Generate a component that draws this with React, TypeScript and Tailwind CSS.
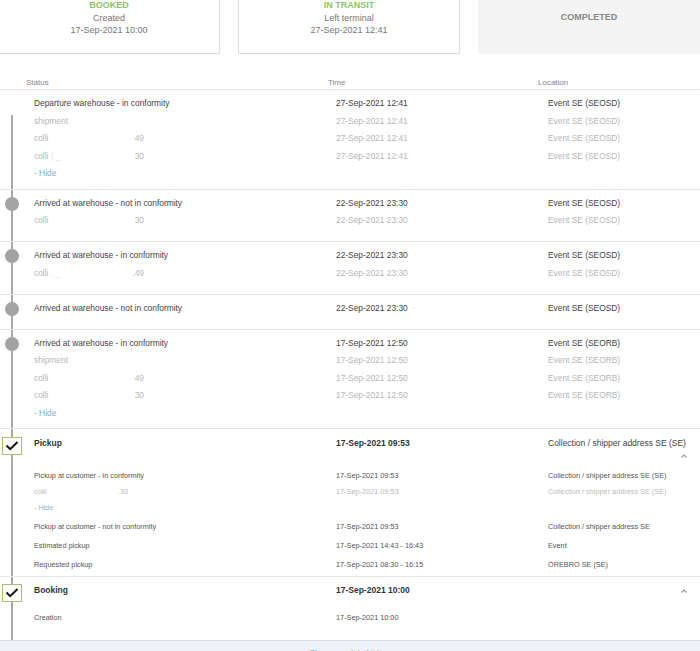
import React from 'react';

type Sub = { label: React.ReactNode; time: string; loc: string };

interface EventRow {
  title: string;
  time: string;
  loc: string;
  subs: Sub[];
  hide?: boolean;
  dot?: boolean;
}

const Colli = ({ num, junk, w = 'w-[110px]' }: { num: string; junk?: string; w?: string }) => (
  <span className={`flex ${w} justify-between`}>
    <span>
      colli<span className="text-[#e4e4e4]">{junk}</span>
    </span>
    <span>{num}</span>
  </span>
);

const rows: EventRow[] = [
  {
    title: 'Departure warehouse - in conformity',
    time: '27-Sep-2021 12:41',
    loc: 'Event SE (SEOSD)',
    hide: true,
    subs: [
      { label: 'shipment', time: '27-Sep-2021 12:41', loc: 'Event SE (SEOSD)' },
      { label: <Colli num="49" />, time: '27-Sep-2021 12:41', loc: 'Event SE (SEOSD)' },
      { label: <Colli num="30" junk=" (   _" />, time: '27-Sep-2021 12:41', loc: 'Event SE (SEOSD)' },
    ],
  },
  {
    title: 'Arrived at warehouse - not in conformity',
    time: '22-Sep-2021 23:30',
    loc: 'Event SE (SEOSD)',
    dot: true,
    subs: [{ label: <Colli num="30" />, time: '22-Sep-2021 23:30', loc: 'Event SE (SEOSD)' }],
  },
  {
    title: 'Arrived at warehouse - in conformity',
    time: '22-Sep-2021 23:30',
    loc: 'Event SE (SEOSD)',
    dot: true,
    subs: [{ label: <Colli num=".49" junk="      .._" />, time: '22-Sep-2021 23:30', loc: 'Event SE (SEOSD)' }],
  },
  {
    title: 'Arrived at warehouse - not in conformity',
    time: '22-Sep-2021 23:30',
    loc: 'Event SE (SEOSD)',
    dot: true,
    subs: [],
  },
  {
    title: 'Arrived at warehouse - in conformity',
    time: '17-Sep-2021 12:50',
    loc: 'Event SE (SEORB)',
    dot: true,
    hide: true,
    subs: [
      { label: 'shipment', time: '17-Sep-2021 12:50', loc: 'Event SE (SEORB)' },
      { label: <Colli num="49" junk=" ." />, time: '17-Sep-2021 12:50', loc: 'Event SE (SEORB)' },
      { label: <Colli num="30" />, time: '17-Sep-2021 12:50', loc: 'Event SE (SEORB)' },
    ],
  },
];

const Caret = () => (
  <svg width="6" height="4" viewBox="0 0 6 4" className="block">
    <path d="M0.5 3.5 L3 1 L5.5 3.5" fill="none" stroke="#9a9a9a" strokeWidth="1.2" />
  </svg>
);

const CheckBox = ({ top }: { top: string }) => (
  <div className={`absolute left-[2px] ${top} flex h-[18px] w-[20px] items-center justify-center border-[1.5px] border-[#abbd6f] bg-white`}>
    <svg width="14" height="12" viewBox="0 0 14 12">
      <path d="M1.5 5.5 L5.2 9.2 L12.5 2" fill="none" stroke="#111" strokeWidth="2" />
    </svg>
  </div>
);

const StatusCard = ({ title, line1, line2 }: { title: string; line1: string; line2: string }) => (
  <div className="h-[54px] rounded-b-[3px] border-x border-b border-[#dcdcdc] bg-white text-center text-[9px] leading-[12.5px] shadow-[0_1px_2px_rgba(0,0,0,0.06)]">
    <div className="-mt-px">
      <div className="font-bold text-[#8cc46b]">{title}</div>
      <div className="text-[#777]">{line1}</div>
      <div className="text-[#777]">{line2}</div>
    </div>
  </div>
);

const Row = ({ row }: { row: EventRow }) => (
  <div className={`relative border-b border-[#e6e6e6] pt-[5px] ${row.hide ? 'pb-[6px]' : 'pb-[11.5px]'}`}>
    {row.dot && <div className="absolute left-[5px] top-[7px] h-[14px] w-[14px] rounded-full bg-[#a3a3a3]" />}
    <div className="grid grid-cols-[302px_212px_1fr] pl-[34px] text-[8.4px] leading-[17.5px] text-[#444]">
      <div>{row.title}</div>
      <div>{row.time}</div>
      <div>{row.loc}</div>
    </div>
    {row.subs.map((s, i) => (
      <div key={i} className="grid grid-cols-[302px_212px_1fr] pl-[34px] text-[8.4px] leading-[17.5px] text-[#b7b7b7]">
        <div>{s.label}</div>
        <div>{s.time}</div>
        <div>{s.loc}</div>
      </div>
    ))}
    {row.hide && <div className="pl-[34px] text-[8.4px] leading-[17.5px] text-[#8fa9cc]">- Hide</div>}
  </div>
);

const Item = ({ label, time, loc, light }: { label: React.ReactNode; time: string; loc: string; light?: boolean }) => (
  <div className={`grid grid-cols-[302px_212px_1fr] pl-[34px] text-[7.3px] leading-[16px] ${light ? 'text-[#bbb]' : 'text-[#555]'}`}>
    <div>{label}</div>
    <div>{time}</div>
    <div>{loc}</div>
  </div>
);

export default function App() {
  return (
    <div className="h-[651px] w-[700px] overflow-hidden bg-white font-['Liberation_Sans',Arial,Helvetica,sans-serif]">
      <div className="-ml-[2px] grid w-[702px] grid-cols-3 gap-[18px]">
        <StatusCard title="BOOKED" line1="Created" line2="17-Sep-2021 10:00" />
        <StatusCard title="IN TRANSIT" line1="Left terminal" line2="27-Sep-2021 12:41" />
        <div className="h-[54px] bg-[#f4f4f4] pt-[11px] text-center text-[9px] font-bold leading-[12.5px] text-[#888]">
          COMPLETED
        </div>
      </div>

      <div className="grid h-[36px] grid-cols-[302px_210px_1fr] items-end border-b border-[#e9e9e9] pl-[26px] text-[8px] leading-[12px] text-[#888] shadow-[0_1px_2px_rgba(0,0,0,0.04)]">
        <div>Status</div>
        <div>Time</div>
        <div>Location</div>
      </div>

      <div className="relative">
        <div className="absolute bottom-0 left-[11px] top-[25px] w-[2px] bg-[#a8a8a8]" />
        {rows.map((r, i) => (
          <Row key={i} row={r} />
        ))}

        <div className="relative border-b border-[#e6e6e6] pt-[6px]">
          <CheckBox top="top-[8px]" />
          <div className="grid grid-cols-[302px_212px_1fr] pl-[34px] text-[8.5px] leading-[17.5px] text-[#333]">
            <div className="font-bold">Pickup</div>
            <div className="font-bold">17-Sep-2021 09:53</div>
            <div className="text-[#444]">Collection / shipper address SE (SE)</div>
          </div>
          <div className="flex h-[6px] items-center justify-end pr-[13px]">
            <Caret />
          </div>
          <div className="pt-[9.5px]">
            <div className="mb-[3px]">
              <Item label="Pickup at customer - in conformity" time="17-Sep-2021 09:53" loc="Collection / shipper address SE (SE)" />
              <Item label={<Colli num=".30" w="w-[94px]" />} time="17-Sep-2021 09:53" loc="Collection / shipper address SE (SE)" light />
              <div className="pl-[34px] text-[7.3px] leading-[16px] text-[#9cb2cf]">- Hide</div>
            </div>
            <div className="mb-[3px]">
              <Item label="Pickup at customer - not in conformity" time="17-Sep-2021 09:53" loc="Collection / shipper address SE" />
            </div>
            <div className="mb-[3px]">
              <Item label="Estimated pickup" time="17-Sep-2021 14:43 - 16:43" loc="Event" />
            </div>
            <div className="mb-[3px]">
              <Item label="Requested pickup" time="17-Sep-2021 08:30 - 16:15" loc="ÖREBRO SE (SE)" />
            </div>
          </div>
        </div>

        <div className="relative pb-[11px] pt-[5px]">
          <CheckBox top="top-[7px]" />
          <div className="grid grid-cols-[302px_212px_1fr] pl-[34px] text-[8.5px] leading-[17.5px] text-[#333]">
            <div className="font-bold">Booking</div>
            <div className="font-bold">17-Sep-2021 10:00</div>
            <div className="flex items-center justify-end pr-[13px]">
              <Caret />
            </div>
          </div>
          <div className="pt-[10.5px]">
            <div className="mb-[3px]">
              <Item label="Creation" time="17-Sep-2021 10:00" loc="" />
            </div>
          </div>
        </div>
      </div>

      <div className="h-[40px] border-t border-[#d8dde3] bg-[#eef2f6] pt-[6px] text-center text-[8px] leading-[12px] text-[#888]">
        Show complete history
      </div>
    </div>
  );
}
